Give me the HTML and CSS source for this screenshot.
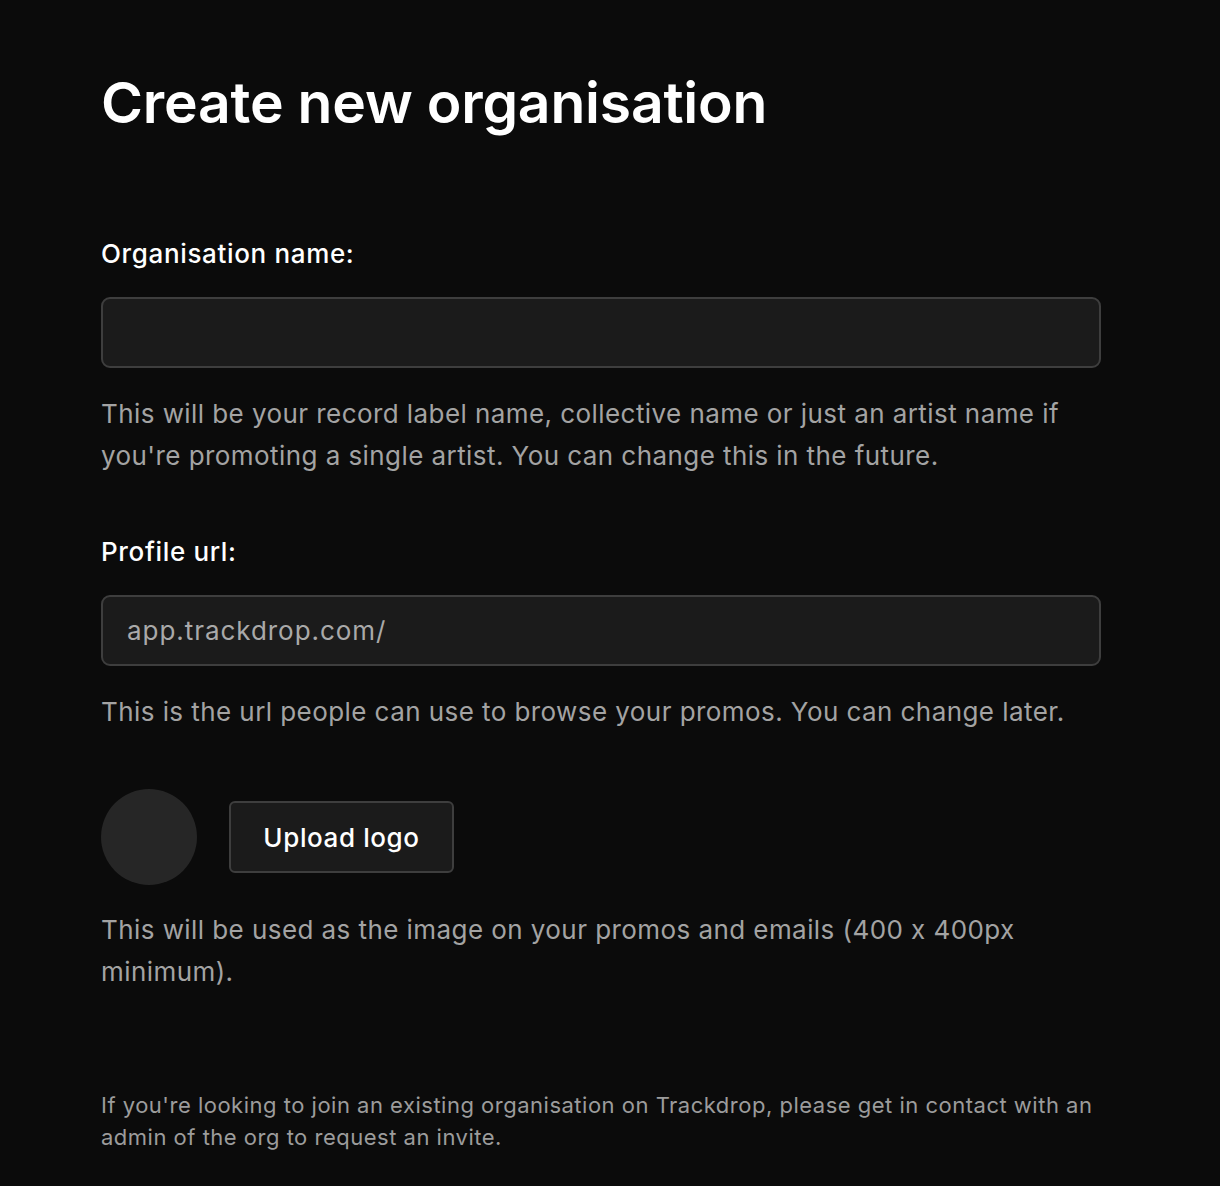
FILE: index.html
```html
<!DOCTYPE html>
<html lang="en">
<head>
<meta charset="utf-8">
<title>Create new organisation</title>
<link rel="stylesheet" href="styles.css">
</head>
<body>
<main class="page">
  <h1 class="title">Create new organisation</h1>

  <section class="field field-first">
    <label class="label" for="org-name">Organisation name:</label>
    <div class="input"><input id="org-name" type="text"></div>
    <p class="help">This will be your record label name, collective name or just an artist name if you're promoting a single artist. You can change this in the future.</p>
  </section>

  <section class="field">
    <label class="label" for="org-url">Profile url:</label>
    <div class="input"><span class="prefix">app.trackdrop.com/</span><input id="org-url" type="text"></div>
    <p class="help">This is the url people can use to browse your promos. You can change later.</p>
  </section>

  <section class="logo-field">
    <div class="logo-row">
      <div class="avatar"></div>
      <button class="upload" type="button">Upload logo</button>
    </div>
    <p class="help">This will be used as the image on your promos and emails (400 x 400px minimum).</p>
  </section>

  <p class="footnote">If you're looking to join an existing organisation on Trackdrop, please get in contact with an admin of the org to request an invite.</p>
</main>
</body>
</html>
```

FILE: styles.css
```css
html, body {
  margin: 0;
  padding: 0;
  background: #0b0b0b;
}

body {
  font-family: Inter, "Noto Sans", "Liberation Sans", sans-serif;
  color: #ffffff;
}

.page {
  width: 1000px;
  padding: 69px 0 0 101px;
  display: flex;
  flex-direction: column;
}

.title {
  margin: 0;
  font-size: 57px;
  line-height: 68px;
  font-weight: 600;
  letter-spacing: -0.2px;
}

.field {
  display: flex;
  flex-direction: column;
}

.field-first {
  margin-top: 101px;
}

.field + .field {
  margin-top: 59px;
}

.label {
  font-size: 26px;
  line-height: 32px;
  font-weight: 500;
  letter-spacing: 0.65px;
}

.input {
  margin-top: 27px;
  height: 71px;
  box-sizing: border-box;
  background: #1b1b1b;
  border: 2px solid #3e3e3e;
  border-radius: 9px;
  display: flex;
  align-items: center;
  padding: 0 24px;
}

.input input {
  flex: 1;
  min-width: 0;
  background: transparent;
  border: 0;
  outline: none;
  color: #fff;
  font: inherit;
  font-size: 26px;
}

.prefix {
  font-size: 26px;
  color: #a9a9a9;
  letter-spacing: 0.95px;
}

.help {
  margin: 25px 0 0;
  font-size: 26px;
  line-height: 42px;
  color: #a3a3a3;
  letter-spacing: 0.43px;
}

.logo-field {
  margin-top: 56px;
}

.logo-row {
  display: flex;
  align-items: center;
  gap: 32px;
}

.avatar {
  width: 96px;
  height: 96px;
  border-radius: 50%;
  background: #262626;
}

.upload {
  width: 225px;
  height: 72px;
  background: #1b1b1b;
  border: 2px solid #3e3e3e;
  border-radius: 6px;
  color: #fff;
  font-family: inherit;
  font-size: 26px;
  font-weight: 500;
  letter-spacing: 0.6px;
  cursor: pointer;
}

.logo-field .help {
  margin-top: 24px;
}

.footnote {
  margin: 96px 0 0;
  font-size: 22px;
  line-height: 32px;
  color: #9c9c9c;
  letter-spacing: 0.5px;
}
```
